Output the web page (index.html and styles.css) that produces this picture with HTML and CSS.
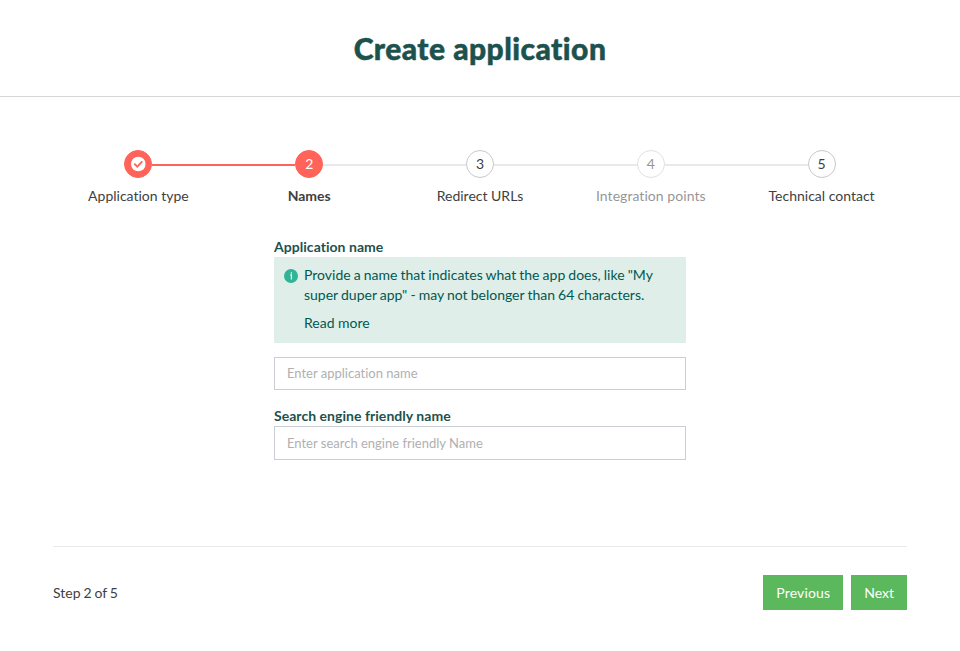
FILE: index.html
```html
<!DOCTYPE html>
<html lang="en">
<head>
<meta charset="utf-8">
<title>Create application</title>
<link rel="stylesheet" href="styles.css">
</head>
<body>
<header class="header"><h1>Create application</h1></header>
<main class="wizard">
  <ol class="steps">
    <li class="step done"><span class="dot"><svg width="16" height="16" viewBox="0 0 16 16"><circle cx="8.3" cy="8" r="7.3" fill="#fff"/><path d="M4.3 7.6l3 3 5-5.2" fill="none" stroke="#ff6359" stroke-width="1.8"/></svg></span><span class="label">Application type</span></li>
    <li class="step active"><span class="dot">2</span><span class="label">Names</span></li>
    <li class="step"><span class="dot">3</span><span class="label">Redirect URLs</span></li>
    <li class="step disabled"><span class="dot">4</span><span class="label">Integration points</span></li>
    <li class="step"><span class="dot">5</span><span class="label">Technical contact</span></li>
  </ol>
  <form class="form">
    <label class="field-label" for="app">Application name</label>
    <div class="info">
      <svg class="info-icon" width="14" height="14" viewBox="0 0 14 14"><circle cx="7" cy="7" r="7" fill="#2fb596"/><path d="M7.4 3.3v1.5M6.2 6h1.2v4.6" fill="none" stroke="#e0eeea" stroke-width="1.3"/></svg>
      <div class="info-text"><p>Provide a name that indicates what the app does, like "My super duper app" - may not belonger than 64 characters.</p><p class="more">Read more</p></div>
    </div>
    <input class="input first" id="app" type="text" placeholder="Enter application name">
    <label class="field-label second" for="seo">Search engine friendly name</label>
    <input class="input" id="seo" type="text" placeholder="Enter search engine friendly Name">
  </form>
  <footer class="footer">
    <span>Step 2 of 5</span>
    <div class="buttons"><button type="button" class="previous">Previous</button><button type="button">Next</button></div>
  </footer>
</main>
</body>
</html>
```
FILE: styles.css
```css
* { box-sizing: border-box; }
body { margin: 0; background: #fff; color: #3d3f42; font: 14px/20px Lato, sans-serif; font-variant-ligatures: none; }
.header { height: 97px; border-bottom: 1px solid #d5d8d8; text-align: center; }
h1 { margin: 0; padding-top: 29px; font-size: 30px; line-height: 38px; font-weight: 900; letter-spacing: .46px; -webkit-text-stroke: .5px #1d514d; color: #1d514d; }
.wizard { padding: 53px 53px 0; }
.steps { display: flex; list-style: none; margin: 0; padding: 0; }
.step { position: relative; flex: 1; display: flex; flex-direction: column; align-items: center; }
.step + .step::before { content: ""; position: absolute; top: 14px; left: calc(-50% + 14px); right: calc(50% + 14px); height: 2px; background: #e9e9e9; }
.step.active::before { background: #ff6359 !important; }
.dot { display: flex; align-items: center; justify-content: center; width: 28px; height: 28px; border: 1px solid #c8c8c8; border-radius: 50%; }
.label { margin-top: 8px; }
.done .dot, .active .dot { background: #ff6359; border-color: #ff6359; color: #fff; }
.active .label { font-weight: 700; }
.disabled .dot, .disabled .label { opacity: .55; }
.disabled .label { letter-spacing: .05px; }
.form { width: 412px; margin: 31px auto 0; }
.field-label { display: block; font-weight: 700; letter-spacing: .04px; color: #1d514d; }
.second { margin-top: 16px; }
.info { display: flex; gap: 6px; height: 86px; padding: 8px 10px; background: #e0eeea; color: #00594f; word-spacing: -.5px; }
.info-icon { flex: none; margin-top: 4px; }
.info p { margin: 0; }
.info .more { margin-top: 8px; word-spacing: 0; }
.input { display: block; width: 100%; height: 34px; padding: 0 12px; border: 1px solid #ccced6; font: 13px Lato, sans-serif; font-variant-ligatures: none; }
.input::placeholder { color: #b0b0b0; }
.first { margin-top: 14px; height: 33px; padding-bottom: 1px; }
.footer { display: flex; align-items: center; justify-content: space-between; height: 92px; margin-top: 86px; border-top: 1px solid #e9e9e9; word-spacing: -.7px; }
.buttons { display: flex; gap: 8px; }
button { height: 35px; padding: 0 13px; border: 0; background: #5cb85c; color: #fff; font: 14px Lato, sans-serif; }
.previous { letter-spacing: .15px; width: 80px; }
```
